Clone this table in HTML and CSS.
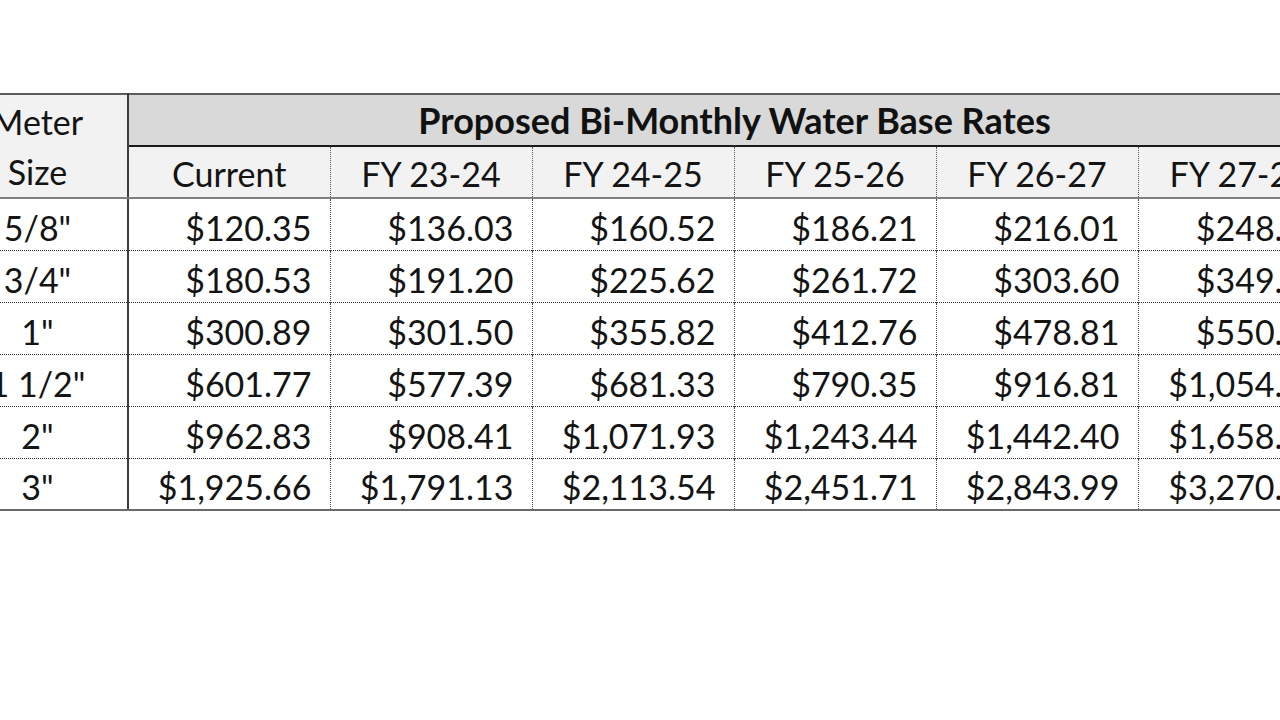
FILE: index.html
```html
<!DOCTYPE html>
<html lang="en">
<head>
<meta charset="utf-8">
<title>Proposed Bi-Monthly Water Base Rates</title>
<link rel="stylesheet" href="styles.css">
</head>
<body>
<table class="rates">
  <colgroup>
    <col class="c-meter">
    <col class="c-year"><col class="c-year"><col class="c-year">
    <col class="c-year"><col class="c-year"><col class="c-year">
  </colgroup>
  <thead>
    <tr class="head-1">
      <th rowspan="2" class="meter-head">Meter<br>Size</th>
      <th colspan="6" class="title">Proposed Bi-Monthly Water Base Rates</th>
    </tr>
    <tr class="head-2">
      <th class="yr">Current</th>
      <th class="yr">FY 23-24</th>
      <th class="yr">FY 24-25</th>
      <th class="yr">FY 25-26</th>
      <th class="yr">FY 26-27</th>
      <th class="yr">FY 27-28</th>
    </tr>
  </thead>
  <tbody>
    <tr><td class="size">5/8"</td><td class="amt">$120.35</td><td class="amt">$136.03</td><td class="amt">$160.52</td><td class="amt">$186.21</td><td class="amt">$216.01</td><td class="amt">$248.41</td></tr>
    <tr><td class="size">3/4"</td><td class="amt">$180.53</td><td class="amt">$191.20</td><td class="amt">$225.62</td><td class="amt">$261.72</td><td class="amt">$303.60</td><td class="amt">$349.14</td></tr>
    <tr><td class="size">1"</td><td class="amt">$300.89</td><td class="amt">$301.50</td><td class="amt">$355.82</td><td class="amt">$412.76</td><td class="amt">$478.81</td><td class="amt">$550.63</td></tr>
    <tr><td class="size">1 1/2"</td><td class="amt">$601.77</td><td class="amt">$577.39</td><td class="amt">$681.33</td><td class="amt">$790.35</td><td class="amt">$916.81</td><td class="amt">$1,054.33</td></tr>
    <tr><td class="size">2"</td><td class="amt">$962.83</td><td class="amt">$908.41</td><td class="amt">$1,071.93</td><td class="amt">$1,243.44</td><td class="amt">$1,442.40</td><td class="amt">$1,658.76</td></tr>
    <tr><td class="size">3"</td><td class="amt">$1,925.66</td><td class="amt">$1,791.13</td><td class="amt">$2,113.54</td><td class="amt">$2,451.71</td><td class="amt">$2,843.99</td><td class="amt">$3,270.59</td></tr>
  </tbody>
</table>
</body>
</html>
```
FILE: styles.css
```css
html, body {
  margin: 0;
  padding: 0;
  background: #ffffff;
  overflow: hidden;
}

body {
  font-family: Lato, "Open Sans", "Liberation Sans", sans-serif;
  color: #141414;
}

.rates {
  border-collapse: collapse;
  table-layout: fixed;
  width: 1392px;
  margin: 93px 0 0 -52px;
  font-size: 34px;
  border-top: 2px solid #5c5c5c;
}

.c-meter { width: 180px; }
.c-year { width: 202px; }

.rates th,
.rates td {
  padding: 0;
  box-sizing: border-box;
  white-space: nowrap;
}

.rates th {
  height: 49px;
}

.rates td {
  height: 52px;
}

.meter-head {
  background: #f2f2f2;
  font-weight: normal;
  line-height: 50px;
  padding-top: 2px !important;
  text-align: center;
  border-right: 2px solid #3c3c3c;
  border-bottom: 2px solid #7f7f7f;
}

.title {
  background: #d9d9d9;
  font-weight: bold;
  font-size: 36px;
  text-align: center;
  color: #111;
  border-bottom: 2px solid #1a1a1a;
}

.yr {
  background: #f2f2f2;
  font-weight: normal;
  text-align: center;
  padding-top: 2px !important;
  border-bottom: 2px solid #7f7f7f;
  border-left: 1px dotted #5a5a5a;
}

.head-2 .yr:first-child {
  border-left: 2px solid #3c3c3c;
}

.size {
  text-align: center;
  border-right: 2px solid #3c3c3c;
  padding-top: 6px !important;
}

.amt {
  text-align: right;
  padding-right: 18px !important;
  padding-top: 6px !important;
  border-left: 1px dotted #4a4a4a;
}

.size + .amt {
  border-left: 2px solid #3c3c3c;
}

.rates tbody tr + tr td {
  border-top: 1px dotted #2e2e2e;
}

.rates tbody tr:last-child td {
  border-bottom: 2px solid #6a6a6a;
}
```
